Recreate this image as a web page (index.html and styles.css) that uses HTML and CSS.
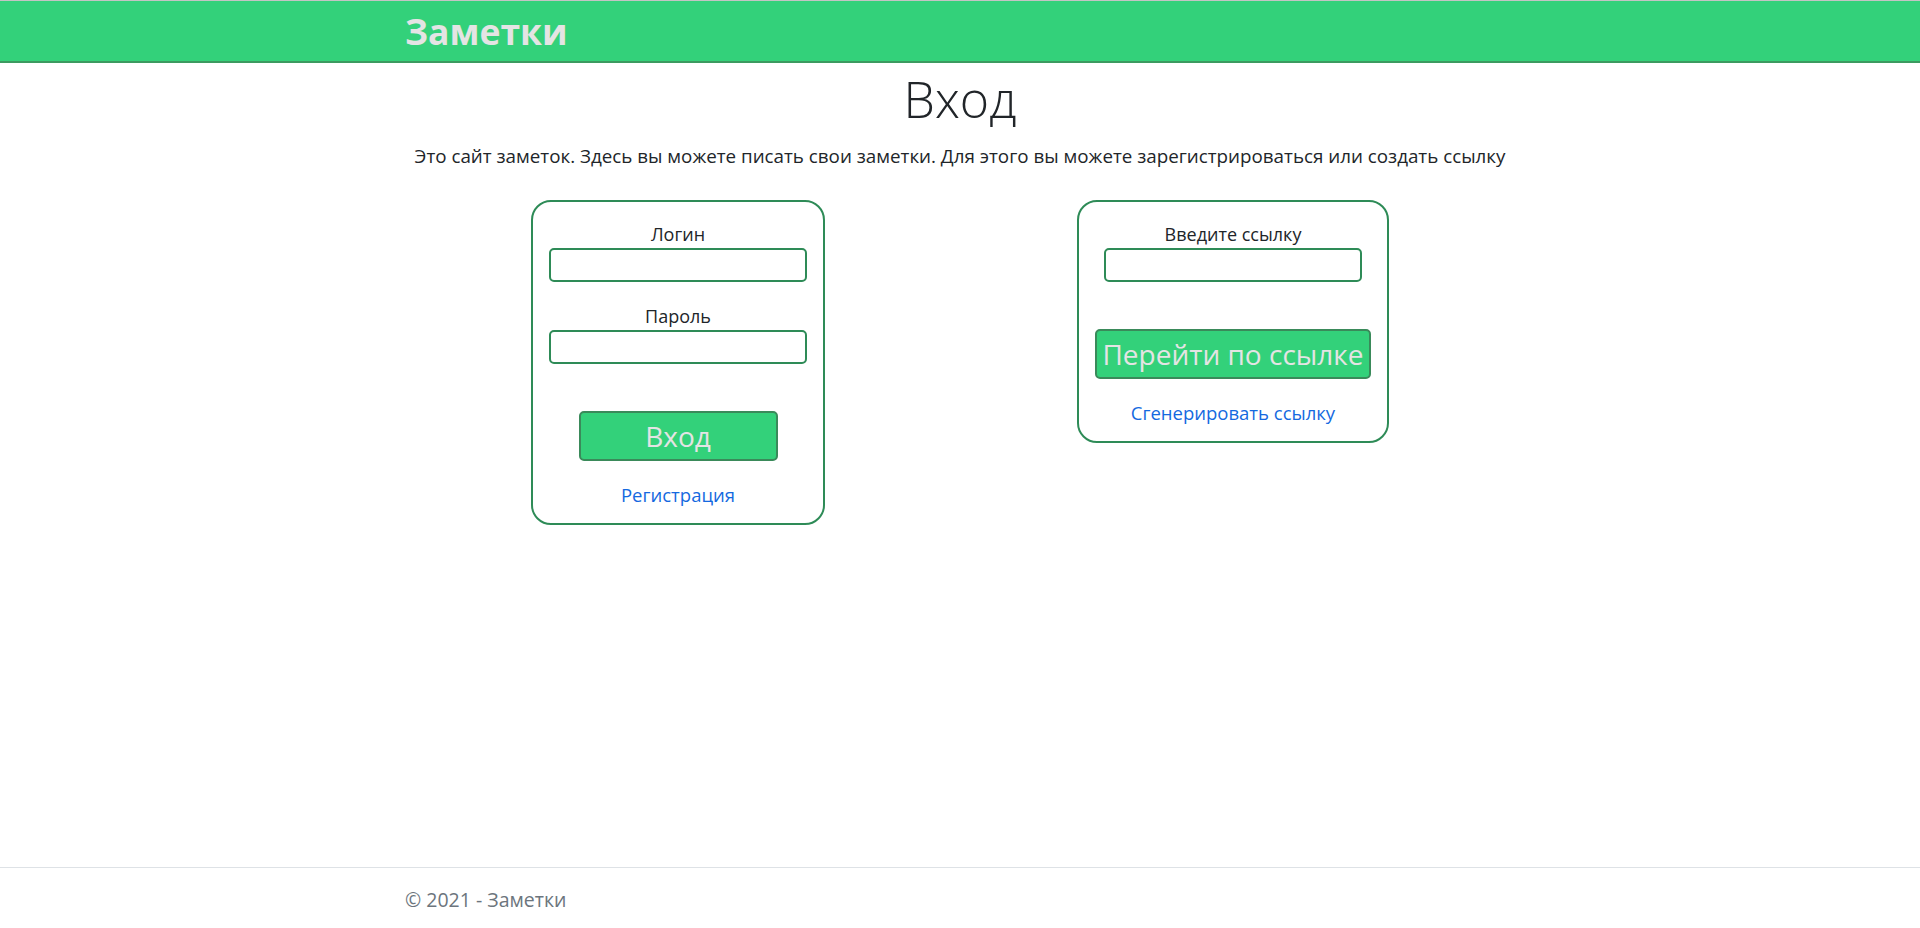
FILE: index.html
```html
<!DOCTYPE html>
<html lang="ru">
<head>
<meta charset="utf-8">
<title>Вход - Заметки</title>
<link rel="stylesheet" href="styles.css">
</head>
<body>
<header class="navbar">
  <div class="container">
    <a class="brand" href="#">Заметки</a>
  </div>
</header>
<main class="container main">
  <h1 class="title">Вход</h1>
  <p class="lead">Это сайт заметок. Здесь вы можете писать свои заметки. Для этого вы можете зарегистрироваться или создать ссылку</p>
  <div class="cards">
    <form class="card card-login">
      <label class="label">Логин</label>
      <input class="input" type="text">
      <label class="label label-second">Пароль</label>
      <input class="input" type="password">
      <button class="btn btn-login" type="button">Вход</button>
      <a class="link" href="#">Регистрация</a>
    </form>
    <form class="card card-link">
      <label class="label">Введите ссылку</label>
      <input class="input" type="text">
      <button class="btn btn-go" type="button">Перейти по ссылке</button>
      <a class="link" href="#">Сгенерировать ссылку</a>
    </form>
  </div>
</main>
<footer class="footer">
  <div class="container">© 2021 - Заметки</div>
</footer>
</body>
</html>
```
FILE: styles.css
```css
html, body {
  margin: 0;
  padding: 0;
}
body {
  font-family: "Open Sans", "Noto Sans", sans-serif;
  color: #212529;
  background: #fff;
  min-height: 100vh;
  display: flex;
  flex-direction: column;
}
.container {
  width: 1110px;
  margin: 0 auto;
}
.navbar {
  border-top: 1px solid #c4c4c4;
  background: #33d17a;
  border-bottom: 2px solid #3c9a60;
  height: 60px;
}
.brand {
  display: inline-block;
  font-size: 35.5px;
  font-weight: 700;
  color: #e4e4e4;
  line-height: 60px;
  text-decoration: none;
}
.main {
  text-align: center;
  flex: 1 0 auto;
}
.title {
  font-size: 50px;
  font-weight: 300;
  line-height: 1.2;
  margin: 6px 0 0;
}
.lead {
  font-size: 18.8px;
  line-height: 24px;
  margin: 15px 0 0;
}
.cards {
  display: flex;
  justify-content: center;
  align-items: flex-start;
  gap: 252px;
  margin-top: 32px;
}
.card {
  border: 2px solid #2e8b57;
  border-radius: 20px;
  padding: 16px;
  display: flex;
  flex-direction: column;
  align-items: center;
}
.card-login {
  width: 258px;
}
.card-link {
  width: 276px;
}
.label {
  font-size: 18px;
  line-height: 24px;
  padding-top: 4px;
}
.label-second {
  margin-top: 18px;
}
.input {
  width: 258px;
  height: 34px;
  box-sizing: border-box;
  border: 2px solid #2e8b57;
  border-radius: 5px;
  margin: 2px 0 0;
  padding: 0 8px;
  font-family: inherit;
  font-size: 16px;
  outline: none;
}
.btn {
  height: 50px;
  box-sizing: border-box;
  background: #33d17a;
  border: 2px solid #3a8a5a;
  border-radius: 5px;
  color: #e4e4e4;
  font-family: inherit;
  font-size: 28px;
  line-height: 1;
  padding: 0 4px;
  margin-top: 47px;
  white-space: nowrap;
  cursor: pointer;
}
.btn-login {
  width: 199px;
}
.btn-go {
  width: 276px;
}
.link {
  margin-top: 22px;
  font-size: 18.5px;
  line-height: 24px;
  color: #1469e0;
  text-decoration: none;
}
.footer {
  border-top: 1px solid #dee2e6;
  padding-top: 3px;
  line-height: 57px;
  color: #6c757d;
  font-size: 19.5px;
}
```
